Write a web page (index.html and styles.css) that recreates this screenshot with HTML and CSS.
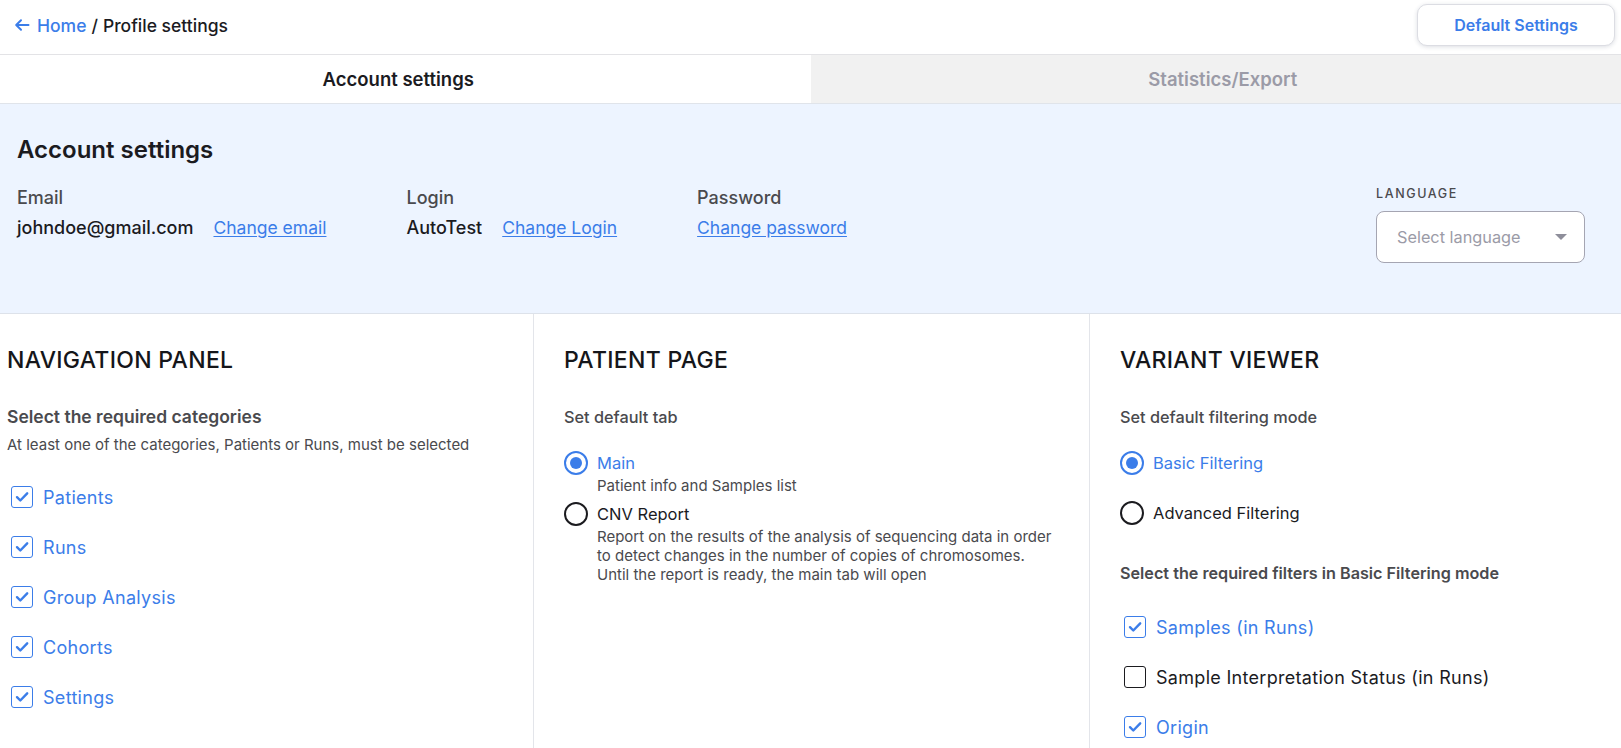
FILE: index.html
```html
<!DOCTYPE html>
<html lang="en">
<head>
<meta charset="utf-8">
<title>Profile settings</title>
<link rel="stylesheet" href="styles.css">
</head>
<body>
<header class="topbar">
  <nav class="crumbs">
    <svg class="back-icon" viewBox="0 0 16 16" width="16" height="16"><path d="M14.5 8H2.5M7 3.2L2.2 8L7 12.8" fill="none" stroke="#3b7de9" stroke-width="2" stroke-linecap="round" stroke-linejoin="round"/></svg>
    <a class="crumb-link" href="#">Home</a>
    <span class="crumb-sep">/</span>
    <span class="crumb-current">Profile settings</span>
  </nav>
  <button class="btn-default">Default Settings</button>
</header>

<div class="tabs">
  <div class="tab tab-active">Account settings</div>
  <div class="tab tab-inactive">Statistics/Export</div>
</div>

<section class="account">
  <div class="account-main">
    <h2 class="account-title">Account settings</h2>
    <div class="fields">
      <div class="field">
        <div class="field-label">Email</div>
        <div class="field-row">
          <span class="field-value">johndoe@gmail.com</span>
          <a class="field-link" href="#">Change email</a>
        </div>
      </div>
      <div class="field">
        <div class="field-label">Login</div>
        <div class="field-row">
          <span class="field-value">AutoTest</span>
          <a class="field-link" href="#">Change Login</a>
        </div>
      </div>
      <div class="field">
        <div class="field-label">Password</div>
        <div class="field-row">
          <a class="field-link" href="#">Change password</a>
        </div>
      </div>
    </div>
  </div>
  <div class="language">
    <div class="language-label">LANGUAGE</div>
    <div class="select">
      <span class="select-placeholder">Select language</span>
      <span class="select-caret"></span>
    </div>
  </div>
</section>

<section class="columns">
  <div class="col col-first">
    <h3 class="col-title">NAVIGATION PANEL</h3>
    <div class="group-label group-label-big">Select the required categories</div>
    <div class="group-hint">At least one of the categories, Patients or Runs, must be selected</div>
    <ul class="checks">
      <li class="check checked"><span class="box"><svg viewBox="0 0 22 22" width="22" height="22"><path d="M6 11.2l3.3 3.3L16.2 7.3" fill="none" stroke="#3b7de9" stroke-width="2.4" stroke-linecap="round" stroke-linejoin="round"/></svg></span>Patients</li>
      <li class="check checked"><span class="box"><svg viewBox="0 0 22 22" width="22" height="22"><path d="M6 11.2l3.3 3.3L16.2 7.3" fill="none" stroke="#3b7de9" stroke-width="2.4" stroke-linecap="round" stroke-linejoin="round"/></svg></span>Runs</li>
      <li class="check checked"><span class="box"><svg viewBox="0 0 22 22" width="22" height="22"><path d="M6 11.2l3.3 3.3L16.2 7.3" fill="none" stroke="#3b7de9" stroke-width="2.4" stroke-linecap="round" stroke-linejoin="round"/></svg></span>Group Analysis</li>
      <li class="check checked"><span class="box"><svg viewBox="0 0 22 22" width="22" height="22"><path d="M6 11.2l3.3 3.3L16.2 7.3" fill="none" stroke="#3b7de9" stroke-width="2.4" stroke-linecap="round" stroke-linejoin="round"/></svg></span>Cohorts</li>
      <li class="check checked"><span class="box"><svg viewBox="0 0 22 22" width="22" height="22"><path d="M6 11.2l3.3 3.3L16.2 7.3" fill="none" stroke="#3b7de9" stroke-width="2.4" stroke-linecap="round" stroke-linejoin="round"/></svg></span>Settings</li>
    </ul>
  </div>

  <div class="col col-mid">
    <h3 class="col-title">PATIENT PAGE</h3>
    <div class="group-label group-label-light">Set default tab</div>
    <div class="radios radios-tight">
      <div class="radio selected">
        <span class="dot"></span>
        <div class="radio-body">
          <div class="radio-label">Main</div>
          <div class="radio-desc">Patient info and Samples list</div>
        </div>
      </div>
      <div class="radio">
        <span class="dot"></span>
        <div class="radio-body">
          <div class="radio-label">CNV Report</div>
          <div class="radio-desc">Report on the results of the analysis of sequencing data in order to detect changes in the number of copies of chromosomes. Until the report is ready, the main tab will open</div>
        </div>
      </div>
    </div>
  </div>

  <div class="col col-last">
    <h3 class="col-title">VARIANT VIEWER</h3>
    <div class="group-label group-label-light">Set default filtering mode</div>
    <div class="radios radios-spaced">
      <div class="radio selected">
        <span class="dot"></span>
        <div class="radio-body"><div class="radio-label">Basic Filtering</div></div>
      </div>
      <div class="radio">
        <span class="dot"></span>
        <div class="radio-body"><div class="radio-label">Advanced Filtering</div></div>
      </div>
    </div>
    <div class="group-label group-label-second">Select the required filters in Basic Filtering mode</div>
    <ul class="checks checks-second">
      <li class="check checked"><span class="box"><svg viewBox="0 0 22 22" width="22" height="22"><path d="M6 11.2l3.3 3.3L16.2 7.3" fill="none" stroke="#3b7de9" stroke-width="2.4" stroke-linecap="round" stroke-linejoin="round"/></svg></span>Samples (in Runs)</li>
      <li class="check"><span class="box"></span>Sample Interpretation Status (in Runs)</li>
      <li class="check checked"><span class="box"><svg viewBox="0 0 22 22" width="22" height="22"><path d="M6 11.2l3.3 3.3L16.2 7.3" fill="none" stroke="#3b7de9" stroke-width="2.4" stroke-linecap="round" stroke-linejoin="round"/></svg></span>Origin</li>
    </ul>
  </div>
</section>
</body>
</html>
```

FILE: styles.css
```css
* { box-sizing: border-box; }

html, body {
  margin: 0;
  padding: 0;
  background: #ffffff;
  font-family: Inter, "Noto Sans", "Liberation Sans", sans-serif;
  color: #1b1b1f;
  overflow: hidden;
}

/* Header */
.topbar {
  height: 55px;
  display: flex;
  justify-content: space-between;
  align-items: flex-start;
  padding: 4px 6px 0 14px;
  border-bottom: 1px solid #e3e3e6;
}

.crumbs {
  display: flex;
  align-items: center;
  height: 42px;
  font-size: 17.5px;
  font-weight: 500;
}

.back-icon { margin-right: 7px; }

.crumb-link {
  color: #3b7de9;
  text-decoration: none;
}

.crumb-sep { margin: 0 5px; color: #1b1b1f; }
.crumb-current { color: #1b1b1f; }

.btn-default {
  width: 198px;
  height: 42px;
  border: 1px solid #dcdde3;
  border-radius: 10px;
  background: #ffffff;
  box-shadow: 0 1px 4px rgba(40, 50, 80, 0.16);
  color: #3b7de9;
  font-family: inherit;
  font-size: 16px;
  font-weight: 600;
}

/* Tabs */
.tabs {
  display: grid;
  grid-template-columns: 1fr 1fr;
  height: 49px;
  border-bottom: 1px solid #e0e4ea;
}

.tab {
  display: flex;
  align-items: center;
  justify-content: center;
  font-size: 18.5px;
  font-weight: 600;
}

.tab-active { background: #ffffff; color: #1b1b1f; padding-right: 14px; }
.tab-inactive { background: #f1f1f1; color: #9b9ba7; padding-left: 14px; }

/* Account */
.account {
  height: 210px;
  background: #edf4ff;
  border-bottom: 1px solid #dde2ea;
  display: flex;
  justify-content: space-between;
  padding: 32px 36px 0 17px;
}

.account-title {
  margin: 0;
  font-size: 24px;
  line-height: 28px;
  font-weight: 600;
  color: #1b1b1f;
}

.fields {
  display: flex;
  gap: 80px;
  margin-top: 23px;
}

.field-label {
  font-size: 18px;
  line-height: 22px;
  font-weight: 500;
  color: #4a4a4e;
}

.field-row {
  display: flex;
  gap: 20px;
  margin-top: 8px;
  font-size: 17.5px;
  line-height: 22px;
}

.field-value {
  font-size: 18px;
  font-weight: 500;
  color: #1b1b1f;
}

.field-link {
  color: #3b7de9;
  text-decoration: underline;
  text-underline-offset: 2px;
}

.language {
  padding-top: 50px;
}

.language-label {
  font-size: 12.5px;
  line-height: 16px;
  letter-spacing: 1.6px;
  font-weight: 500;
  color: #4a4a4e;
}

.select {
  margin-top: 9px;
  width: 209px;
  height: 52px;
  background: #ffffff;
  border: 1px solid #a5a5b2;
  border-radius: 8px;
  display: flex;
  align-items: center;
  justify-content: space-between;
  padding: 0 17px 0 20px;
}

.select-placeholder {
  font-size: 16.3px;
  color: #9b9ba7;
}

.select-caret {
  width: 0;
  height: 0;
  border-left: 6px solid transparent;
  border-right: 6px solid transparent;
  border-top: 6px solid #8e8e9a;
}

/* Columns */
.columns {
  display: grid;
  grid-template-columns: 533fr 556fr 532fr;
  height: 435px;
}

.col {
  padding: 34px 30px 0 30px;
  border-left: 1px solid #e3e5ea;
}

.col-first {
  padding-left: 7px;
  border-left: none;
}

.col-mid { padding-right: 32px; }

.col-title {
  margin: 0;
  font-size: 23px;
  line-height: 24px;
  font-weight: 500;
  letter-spacing: 0.3px;
  color: #15161a;
}

.group-label {
  margin-top: 35px;
  font-size: 16.2px;
  line-height: 20px;
  font-weight: 600;
  color: #4a4a4e;
}

.group-label-big { font-size: 17.5px; }
.group-label-light { font-weight: 500; font-size: 16.3px; }

.group-label-second { margin-top: 38px; }

.group-hint {
  margin-top: 9px;
  font-size: 15px;
  line-height: 18px;
  color: #4a4a4e;
}

.checks {
  list-style: none;
  margin: 31px 0 0 0;
  padding: 0;
}

.checks-second { margin-top: 32px; }

.check {
  display: flex;
  align-items: center;
  height: 24px;
  margin-bottom: 26px;
  padding-left: 4px;
  font-size: 18px;
  letter-spacing: 0.3px;
  color: #1b1b1f;
}

.check.checked { color: #3b7de9; }

.box {
  width: 22px;
  height: 22px;
  flex: none;
  margin-right: 10px;
  border: 1.5px solid #1b1b1f;
  border-radius: 3px;
  display: flex;
  align-items: center;
  justify-content: center;
}

.box svg { display: block; flex: none; }

.checked .box { border-color: #3b7de9; }

.radios { margin-top: 24px; }

.radio {
  display: flex;
  align-items: flex-start;
}

.radios-tight .radio + .radio { margin-top: 7px; }
.radios-spaced .radio + .radio { margin-top: 26px; }

.dot {
  width: 24px;
  height: 24px;
  flex: none;
  border-radius: 50%;
  border: 2.5px solid #1b1b1f;
  margin-right: 9px;
  position: relative;
}

.selected .dot { border-color: #3b7de9; }

.selected .dot::after {
  content: "";
  position: absolute;
  left: 3.5px;
  top: 3.5px;
  width: 12px;
  height: 12px;
  border-radius: 50%;
  background: #3b7de9;
}

.radio-label {
  font-size: 16.5px;
  line-height: 24px;
  color: #1b1b1f;
}

.selected .radio-label { color: #3b7de9; }

.radio-desc {
  margin-top: 1px;
  font-size: 15px;
  line-height: 19px;
  color: #4a4a4e;
}
```
